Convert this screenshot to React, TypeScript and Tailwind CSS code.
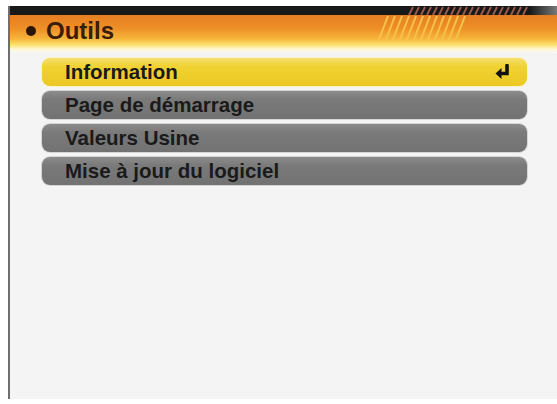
import React from "react";

const items = [
  "Information",
  "Page de démarrage",
  "Valeurs Usine",
  "Mise à jour du logiciel",
];

function EnterIcon() {
  return (
    <svg width="18" height="17" viewBox="0 0 18 17" className="shrink-0">
      <path d="M13 1.5 V9.5 H6" fill="none" stroke="#111" strokeWidth="3.6" strokeLinecap="round" />
      <path d="M1.5 9.5 L7.5 4 L7.5 15 Z" fill="#111" />
    </svg>
  );
}

export default function App() {
  return (
    <div className="w-[557px] h-[404px] bg-white pl-[8px] pt-[6px] overflow-hidden font-['Liberation_Sans',Arial,sans-serif]">
      <div className="relative h-[393px] flex flex-col border-l-2 border-[#6f6f6f] bg-[#f4f4f4]">
        {/* top dark strip */}
        <div className="h-[9px] shrink-0 bg-[linear-gradient(to_right,#181818_0%,#181818_95%,#7a7a7a_100%)]" />
        {/* orange header */}
        <div className="h-[38px] shrink-0 flex items-center pl-[16px] gap-[10px] bg-[linear-gradient(to_bottom,#e67e22_0%,#ee8f26_35%,#f6b43a_62%,#fbe06a_78%,#fff7d6_90%,#f7f7f4_100%)]">
          <span className="w-[10px] h-[10px] rounded-full bg-[#2a1406] -mt-[6px]" />
          <span className="text-[24px] leading-none font-bold text-[#3b1c08] -mt-[6px]">Outils</span>
        </div>

        {/* hatched decoration */}
        <svg className="absolute left-[397px] top-0 w-[125px] h-[9px]" viewBox="0 0 125 9">
          {Array.from({ length: 20 }).map((_, i) => (
            <line key={i} x1={i * 6 + 2} y1={9} x2={i * 6 + 6} y2={1} stroke="#9a5a4a" strokeWidth="2" />
          ))}
        </svg>
        <svg className="absolute left-[366px] top-[10px] w-[92px] h-[26px]" viewBox="0 0 92 26">
          {Array.from({ length: 12 }).map((_, i) => (
            <line key={i} x1={i * 7 + 2} y1={26} x2={i * 7 + 12} y2={0} stroke="#f5c24a" strokeWidth="2" />
          ))}
        </svg>

        {/* menu */}
        <div className="flex flex-col gap-[5px] pl-[32px] pr-[30px] pt-[5px]">
          {items.map((label, i) => {
            const active = i === 0;
            return (
              <div
                key={label}
                className={
                  active
                    ? "h-[28px] rounded-[8px] flex items-center justify-between pl-[23px] pr-[15px] ring-1 ring-[#fbf3c8] bg-[linear-gradient(to_bottom,#f6e070_0%,#f0d232_30%,#ebc824_100%)]"
                    : "h-[28px] rounded-[8px] flex items-center pl-[23px] pr-[15px] ring-1 ring-[#d6d6d6] bg-[linear-gradient(to_bottom,#8c8c8c_0%,#7a7a7a_30%,#727272_100%)]"
                }
              >
                <span className="text-[20.5px] leading-none font-bold text-[#1a1a1a]">{label}</span>
                {active && <EnterIcon />}
              </div>
            );
          })}
        </div>
      </div>
    </div>
  );
}
